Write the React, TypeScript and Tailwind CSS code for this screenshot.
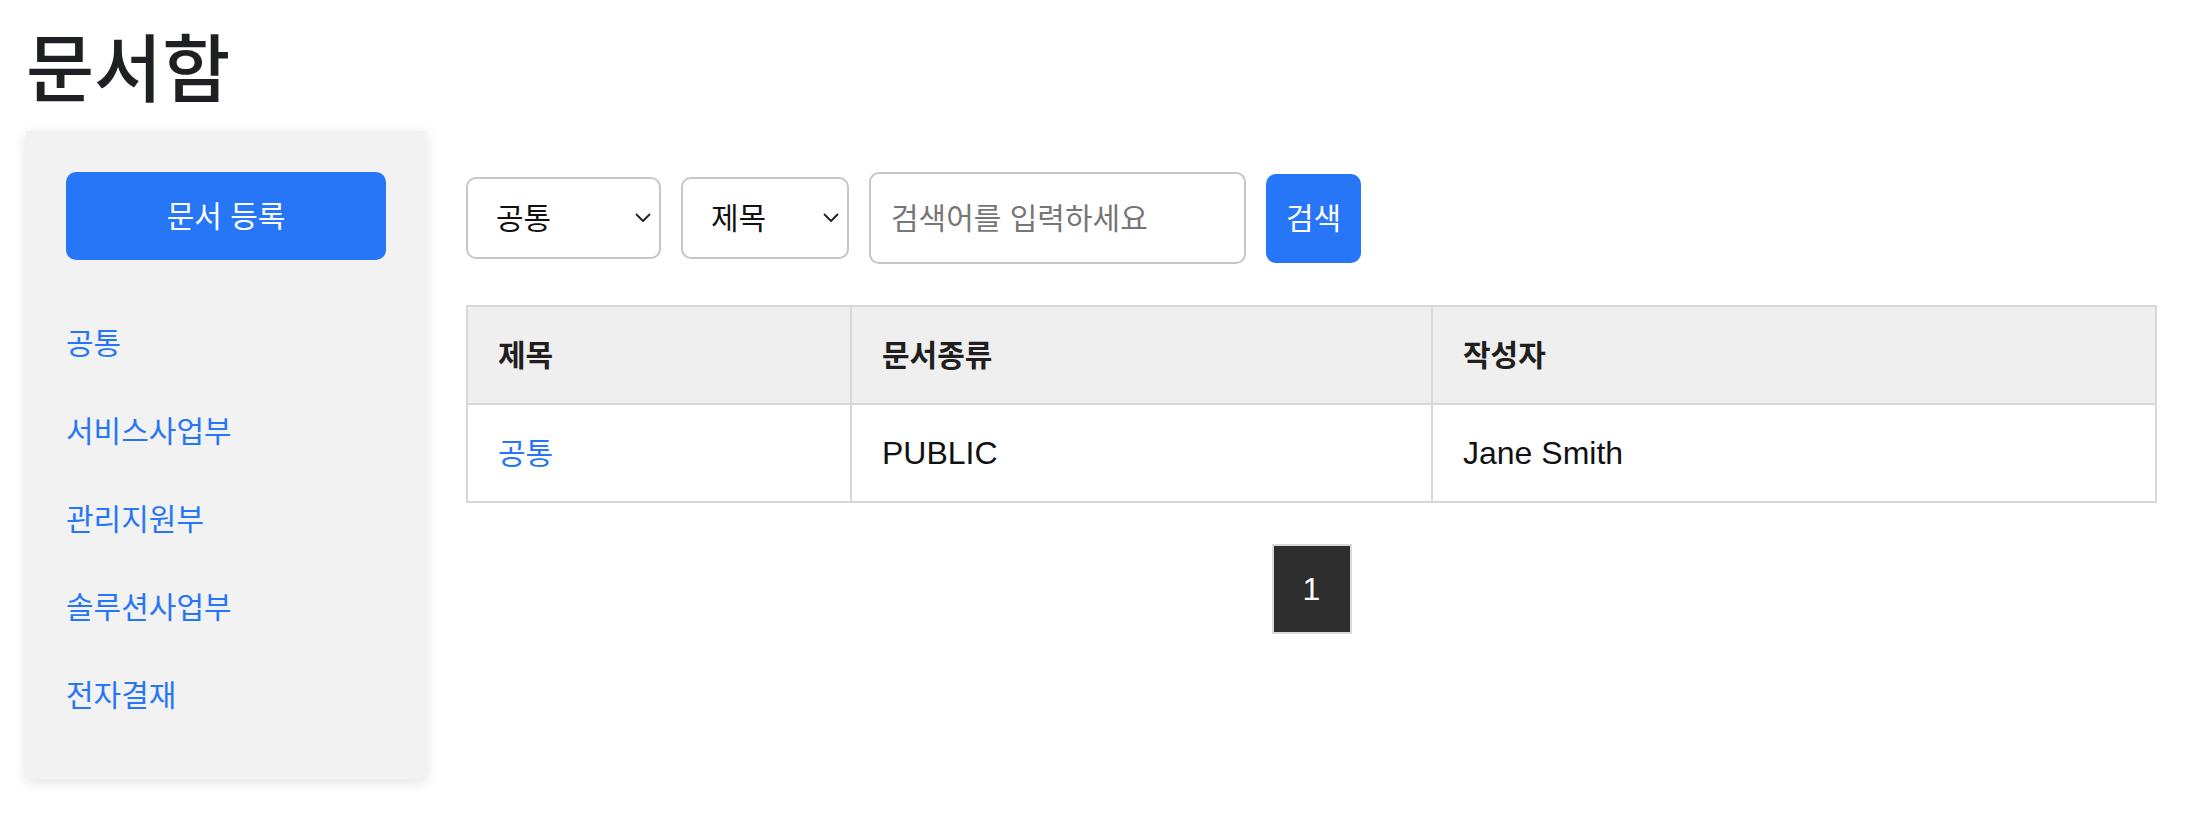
import React from "react";

const FONT = '"Liberation Sans", "Noto Sans CJK KR", sans-serif';

function Chevron() {
  return (
    <svg width="16" height="10" viewBox="0 0 16 10" className="shrink-0">
      <path d="M1.5 1.5 L8 8 L14.5 1.5" fill="none" stroke="#1f1f1f" strokeWidth="1.8" strokeLinecap="round" strokeLinejoin="round" />
    </svg>
  );
}

function FakeSelect({ label, width }: { label: string; width: string }) {
  return (
    <div className={`${width} flex h-[82px] items-center justify-between rounded-[10px] border-2 border-[#c6c6c6] bg-white pl-[28px] pr-[8px]`}>
      <span className="text-[30px] text-[#111]">{label}</span>
      <Chevron />
    </div>
  );
}

export default function App() {
  const items = ["공통", "서비스사업부", "관리지원부", "솔루션사업부", "전자결재"];
  return (
    <div className="min-h-screen bg-white px-[26px] pt-[34px]" style={{ fontFamily: FONT }}>
      <h1 className="text-[74px] font-medium leading-none text-[#1f2023]">문서함</h1>
      <div className="mt-[23px] flex items-start">
        <aside className="w-[400px] shrink-0 bg-[#f2f2f2] px-[40px] pb-[40px] pt-[41px] shadow-[0_3px_14px_rgba(0,0,0,0.12)]">
          <button className="flex h-[88px] w-full items-center justify-center rounded-[10px] bg-[#2776f7] text-[30px] text-white">
            문서 등록
          </button>
          <ul className="mt-[39px]">
            {items.map((it) => (
              <li key={it} className="flex h-[88px] items-center text-[30px] text-[#2776f7]">
                {it}
              </li>
            ))}
          </ul>
        </aside>
        <main className="flex-1 pl-[40px] pr-[19px] pt-[41px]">
          <div className="flex h-[92px] items-center gap-[20px]">
            <FakeSelect label="공통" width="w-[195px]" />
            <FakeSelect label="제목" width="w-[168px]" />
            <div className="flex h-[92px] w-[377px] items-center rounded-[10px] border-2 border-[#c6c6c6] bg-white pl-[20px]">
              <span className="text-[30px] text-[#767676]">검색어를 입력하세요</span>
            </div>
            <button className="flex h-[89px] w-[95px] items-center justify-center rounded-[10px] bg-[#2776f7] text-[30px] text-white">
              검색
            </button>
          </div>
          <table className="mt-[41px] w-full border-collapse border-2 border-[#d8d8d8]">
            <thead>
              <tr className="h-[98px] bg-[#efefef]">
                <th className="w-[384px] border-2 border-[#d8d8d8] pl-[30px] text-left text-[30px] font-bold text-[#1f1f1f]">제목</th>
                <th className="w-[581px] border-2 border-[#d8d8d8] pl-[30px] text-left text-[30px] font-bold text-[#1f1f1f]">문서종류</th>
                <th className="border-2 border-[#d8d8d8] pl-[30px] text-left text-[30px] font-bold text-[#1f1f1f]">작성자</th>
              </tr>
            </thead>
            <tbody>
              <tr className="h-[98px] bg-white">
                <td className="border-2 border-[#d8d8d8] pl-[30px] text-[30px] text-[#2776f7]">공통</td>
                <td className="border-2 border-[#d8d8d8] pl-[30px] text-[32px] text-[#111]">PUBLIC</td>
                <td className="border-2 border-[#d8d8d8] pl-[30px] text-[32px] text-[#111]">Jane Smith</td>
              </tr>
            </tbody>
          </table>
          <div className="mt-[41px] flex justify-center">
            <div className="flex h-[90px] w-[80px] items-center justify-center border-2 border-[#d9d9d9] bg-[#2d2d2d] text-[32px] text-white">
              1
            </div>
          </div>
        </main>
      </div>
    </div>
  );
}
